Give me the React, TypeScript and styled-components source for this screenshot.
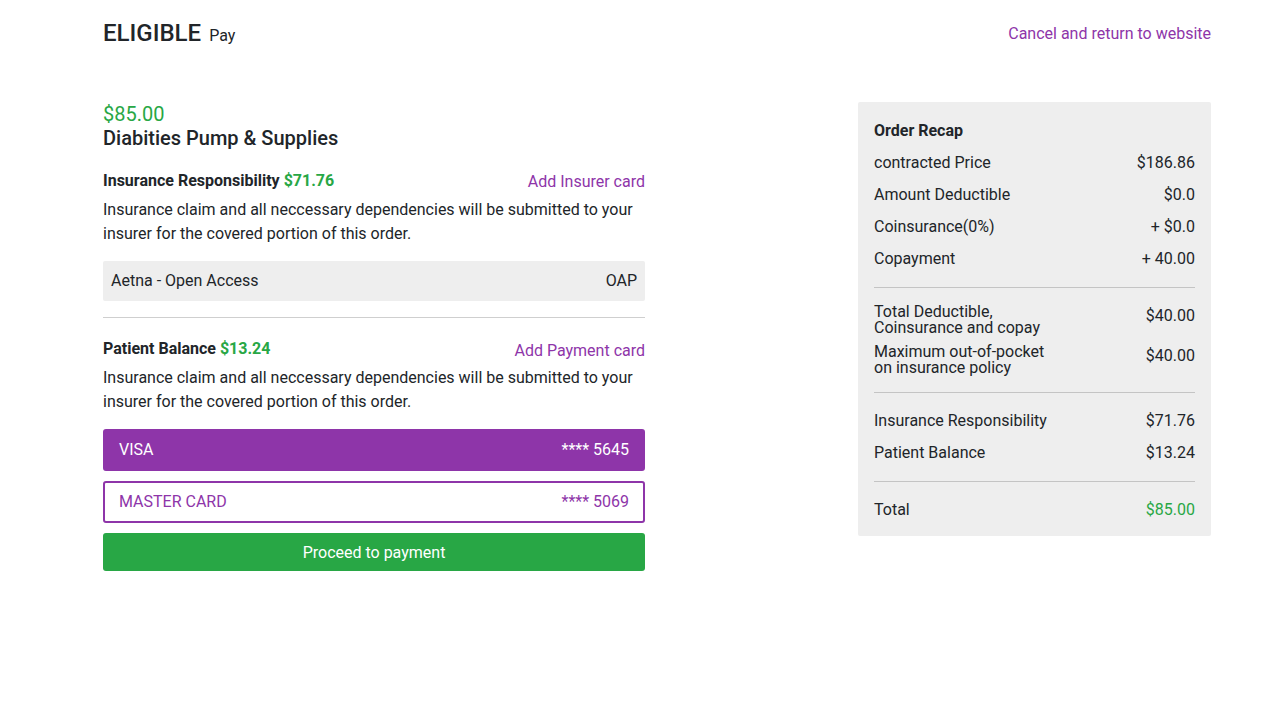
import React from 'react'
import styled, { createGlobalStyle } from 'styled-components'

const purple = '#8e35a9'
const green = '#28a745'
const ink = '#212529'

const GlobalStyle = createGlobalStyle`
  html, body {
    margin: 0;
    padding: 0;
    background: #fff;
  }
  body {
    font-family: Roboto, 'Liberation Sans', sans-serif;
    font-size: 16px;
    line-height: 24px;
    color: ${ink};
  }
  * { box-sizing: border-box; }
`

const Page = styled.div`
  width: 1108px;
  margin-left: 103px;
`

const Header = styled.header`
  display: flex;
  justify-content: space-between;
  align-items: center;
  height: 68px;
`

const Brand = styled.div`
  display: flex;
  align-items: baseline;
  gap: 8px;
  h1 {
    margin: 0;
    font-size: 24px;
    font-weight: 500;
    letter-spacing: 0;
  }
  span {
    font-size: 16px;
  }
`

const Link = styled.a<{ $drop?: number }>`
  color: ${purple};
  text-decoration: none;
  font-size: 16px;
  cursor: pointer;
  padding-top: ${p => p.$drop ?? 0}px;
  margin-bottom: ${p => -(p.$drop ?? 0)}px;
`

const Main = styled.main`
  display: flex;
  justify-content: space-between;
  align-items: flex-start;
  margin-top: 34px;
`

const Left = styled.section`
  width: 542px;
`

const Price = styled.div`
  color: ${green};
  font-size: 20px;
  line-height: 24px;
`

const Title = styled.h2`
  margin: 0;
  font-size: 20px;
  font-weight: 500;
  line-height: 24px;
`

const SectionHead = styled.div`
  display: flex;
  justify-content: space-between;
  align-items: flex-start;
  margin-top: 19px;
  strong {
    font-weight: 700;
  }
  em {
    font-style: normal;
    color: ${green};
    font-weight: 700;
  }
`

const Text = styled.p`
  margin: 5px 0 0;
`

const Plan = styled.div`
  display: flex;
  justify-content: space-between;
  align-items: center;
  height: 40px;
  margin-top: 15px;
  padding: 0 8px;
  background: #eeeeee;
  border-radius: 2px;
`

const Divider = styled.hr`
  border: 0;
  border-top: 1px solid #cfcfcf;
  margin: 16px 0 0;
`

const Card = styled.div<{ $active?: boolean; $top: number }>`
  display: flex;
  justify-content: space-between;
  align-items: center;
  height: 42px;
  margin-top: ${p => p.$top}px;
  padding: 0 14px;
  border: 2px solid ${purple};
  border-radius: 3px;
  background: ${p => (p.$active ? purple : '#fff')};
  color: ${p => (p.$active ? '#fff' : purple)};
  cursor: pointer;
`

const PayButton = styled.button`
  display: block;
  width: 100%;
  height: 38px;
  margin-top: 10px;
  border: 0;
  border-radius: 3px;
  background: ${green};
  color: #fff;
  font-family: inherit;
  font-size: 16px;
  cursor: pointer;
`

const Recap = styled.aside`
  width: 353px;
  background: #eeeeee;
  border-radius: 2px;
  padding: 17px 16px 14px;
`

const RecapTitle = styled.h3`
  margin: 0 0 8px;
  font-size: 16px;
  font-weight: 700;
  line-height: 24px;
`

const Row = styled.div<{ $tight?: boolean }>`
  display: flex;
  justify-content: space-between;
  align-items: flex-start;
  margin-bottom: 8px;
  line-height: ${p => (p.$tight ? '16px' : '24px')};
  &:last-child {
    margin-bottom: 0;
  }
`

const Value = styled.span<{ $green?: boolean }>`
  line-height: 24px;
  color: ${p => (p.$green ? green : 'inherit')};
`

const RecapRule = styled.hr`
  border: 0;
  border-top: 1px solid #c4c4c4;
  margin: 16px 0;
`

export default function App() {
  return (
    <>
      <GlobalStyle />
      <Page>
        <Header>
          <Brand>
            <h1>ELIGIBLE</h1>
            <span>Pay</span>
          </Brand>
          <Link>Cancel and return to website</Link>
        </Header>

        <Main>
          <Left>
            <Price>$85.00</Price>
            <Title>Diabities Pump &amp; Supplies</Title>

            <SectionHead>
              <span>
                <strong>Insurance Responsibility</strong> <em>$71.76</em>
              </span>
              <Link $drop={1}>Add Insurer card</Link>
            </SectionHead>
            <Text>
              Insurance claim and all neccessary dependencies will be submitted to your insurer for the
              covered portion of this order.
            </Text>
            <Plan>
              <span>Aetna - Open Access</span>
              <span>OAP</span>
            </Plan>

            <Divider />

            <SectionHead>
              <span>
                <strong>Patient Balance</strong> <em>$13.24</em>
              </span>
              <Link $drop={2}>Add Payment card</Link>
            </SectionHead>
            <Text>
              Insurance claim and all neccessary dependencies will be submitted to your insurer for the
              covered portion of this order.
            </Text>

            <Card $active $top={15}>
              <span>VISA</span>
              <span>**** 5645</span>
            </Card>
            <Card $top={10}>
              <span>MASTER CARD</span>
              <span>**** 5069</span>
            </Card>
            <PayButton>Proceed to payment</PayButton>
          </Left>

          <Recap>
            <RecapTitle>Order Recap</RecapTitle>
            <Row>
              <span>contracted Price</span>
              <Value>$186.86</Value>
            </Row>
            <Row>
              <span>Amount Deductible</span>
              <Value>$0.0</Value>
            </Row>
            <Row>
              <span>Coinsurance(0%)</span>
              <Value>+ $0.0</Value>
            </Row>
            <Row>
              <span>Copayment</span>
              <Value>+ 40.00</Value>
            </Row>

            <RecapRule />

            <Row $tight>
              <span>
                Total Deductible,
                <br />
                Coinsurance and copay
              </span>
              <Value>$40.00</Value>
            </Row>
            <Row $tight>
              <span>
                Maximum out-of-pocket
                <br />
                on insurance policy
              </span>
              <Value>$40.00</Value>
            </Row>

            <RecapRule />

            <Row>
              <span>Insurance Responsibility</span>
              <Value>$71.76</Value>
            </Row>
            <Row>
              <span>Patient Balance</span>
              <Value>$13.24</Value>
            </Row>

            <RecapRule />

            <Row>
              <span>Total</span>
              <Value $green>$85.00</Value>
            </Row>
          </Recap>
        </Main>
      </Page>
    </>
  )
}
